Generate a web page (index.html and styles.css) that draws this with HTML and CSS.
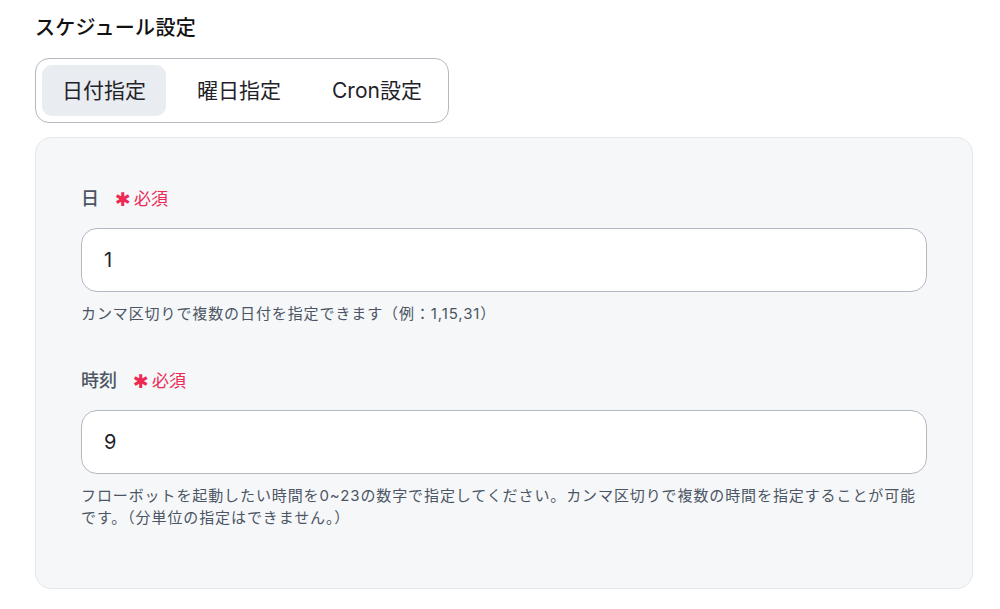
FILE: index.html
```html
<!DOCTYPE html>
<html lang="ja">
<head>
<meta charset="utf-8">
<link rel="stylesheet" href="styles.css">
</head>
<body>
<div class="page">
  <h2 class="title">スケジュール設定</h2>
  <div class="tabs">
    <button class="tab active">日付指定</button>
    <button class="tab">曜日指定</button>
    <button class="tab">Cron設定</button>
  </div>
  <div class="panel">
    <div class="field">
      <label class="label">日<span class="req"><span class="ast">✱</span>必須</span></label>
      <div class="input">1</div>
      <p class="help">カンマ区切りで複数の日付を指定できます（例：1,15,31）</p>
    </div>
    <div class="field">
      <label class="label">時刻<span class="req"><span class="ast">✱</span>必須</span></label>
      <div class="input">9</div>
      <p class="help">フローボットを起動したい時間を0~23の数字で指定してください。カンマ区切りで複数の時間を指定することが可能です。（分単位の指定はできません。）</p>
    </div>
  </div>
</div>
</body>
</html>
```
FILE: styles.css
```css
* { box-sizing: border-box; }
body {
  margin: 0;
  background: #fff;
  font-family: "Inter", "Noto Sans CJK JP", sans-serif;
  color: #111827;
}
.page {
  padding: 14px 27px 0 35px;
  display: flex;
  flex-direction: column;
  align-items: flex-start;
}
.title {
  margin: 0;
  font-size: 20px;
  line-height: 28px;
  font-weight: 500;
  letter-spacing: 0.3px;
  color: #111;
}
.tabs {
  margin-top: 16px;
  display: flex;
  gap: 11px;
  padding: 6px;
  border: 1px solid #b4b9c1;
  border-radius: 14px;
  background: #fff;
}
.tab {
  font-family: inherit;
  font-size: 21px;
  line-height: 27px;
  height: 51px;
  padding: 0 20px;
  border: none;
  background: transparent;
  border-radius: 10px;
  color: #1f2329;
  cursor: pointer;
}
.tab.active { background: #e9ecf0; }
.panel {
  margin-top: 14px;
  align-self: stretch;
  background: #f6f7f9;
  border: 1px solid #e5e7eb;
  border-radius: 16px;
  padding: 49px 45px 59px;
  display: flex;
  flex-direction: column;
  gap: 44px;
}
.label {
  display: flex;
  align-items: center;
  font-size: 18px;
  line-height: 24px;
  font-weight: 500;
  color: #4b5563;
}
.req {
  margin-left: 16px;
  color: #ec2a55;
  font-size: 17px;
  font-weight: 400;
  display: flex;
  align-items: center;
}
.ast {
  font-family: "DejaVu Sans", sans-serif;
  font-size: 19px;
  margin-right: 3px;
}
.input {
  margin-top: 17px;
  height: 64px;
  background: #fff;
  border: 1px solid #b4b9c1;
  border-radius: 16px;
  padding: 0 22px;
  display: flex;
  align-items: center;
  font-size: 20px;
  color: #1f2329;
}
.help {
  margin: 11px 0 0;
  font-size: 15px;
  line-height: 22px;
  color: #4b5563;
  letter-spacing: 0.9px;
}
```
